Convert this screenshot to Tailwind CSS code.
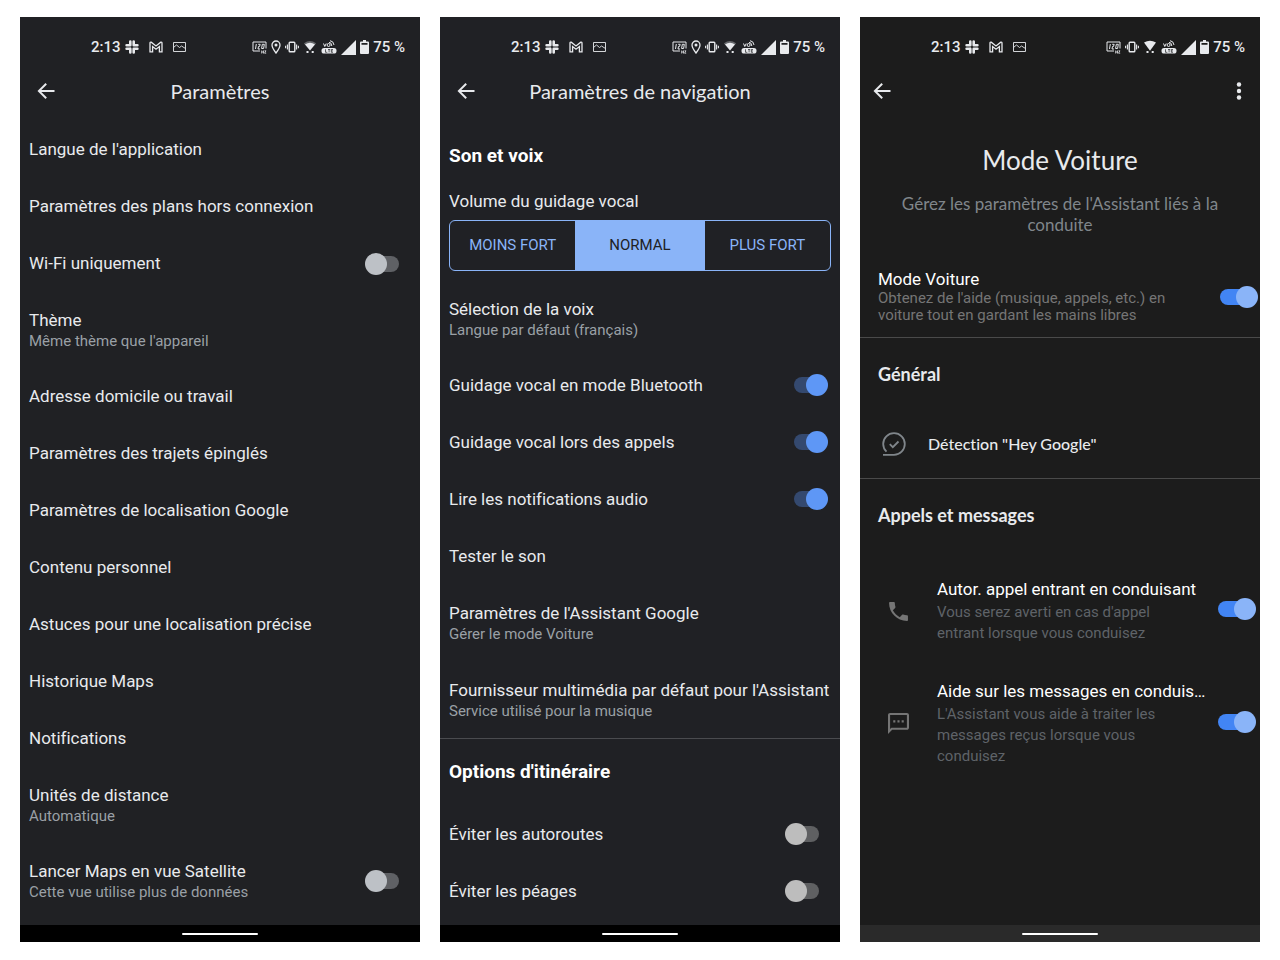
<!DOCTYPE html>
<html lang="fr">
<head>
    <meta charset="UTF-8">
    <meta name="viewport" content="width=device-width, initial-scale=1.0">
    <title>Paramètres</title>
    <script src="https://cdn.jsdelivr.net/npm/@tailwindcss/browser@4"></script>
</head>
<body class="bg-white font-['Roboto',sans-serif] text-[17px] text-[#e8eaed] [font-variant-ligatures:none]">
    <!-- Icons -->
    <svg class="hidden">
        <symbol id="slack" viewBox="0 0 14 14">
            <g stroke="currentColor" stroke-width="2.6" stroke-linecap="round">
                <path d="M5.3 1.6v3.600M1.6 5.300h3.600M8.700 1.600v3.600M8.700 5.300h3.700M5.300 8.700v3.700M1.600 8.700h3.600M8.700 8.700v3.700M8.700 8.700h3.700"/>
            </g>
        </symbol>
        <symbol id="gmail" viewBox="0 0 14 12">
            <path d="M1 10.800V2.200Q1 1 2.200 1.200L7 5l4.800-3.800Q13 1 13 2.200v8.600h-2.600V5.600L7 8.200 3.600 5.600v5.200Z" fill="none" stroke="currentColor" stroke-width="1.300"/>
        </symbol>
        <symbol id="picture" viewBox="0 0 13 12">
            <path d="M.5 1.500h12v9H.5zM.5 6.500l3-2.500 3 2.500 2-1.500 4 2.500" fill="none" stroke="currentColor" stroke-width=".9"/>
        </symbol>
        <symbol id="hz" viewBox="0 0 15 13">
            <path d="M8 10H1V1h13v6.500" fill="none" stroke="currentColor" stroke-width="1"/>
            <path d="M4.300 3l-.8 5M6.200 3.300h2L7.500 5.500h-1L6 8h2M10.300 3.300h2L11.600 7.500h-2z" fill="none" stroke="currentColor" stroke-width="1"/>
            <path d="M9.700 9.500v3M11.500 9.500v3M9.700 11h1.800M12.500 9.800h1.500l-1.500 2.400h1.700" fill="none" stroke="currentColor" stroke-width=".8"/>
        </symbol>
        <symbol id="pin" viewBox="0 0 10 14">
            <path d="M5 13C2.500 9.700 1 7.300 1 5a4 4 0 0 1 8 0c0 2.300-1.500 4.700-4 8Z" fill="none" stroke="currentColor" stroke-width="1.300"/>
            <circle cx="5" cy="5" r="1.500" fill="currentColor"/>
        </symbol>
        <symbol id="vibrate" viewBox="0 0 14 12">
            <rect x="4.200" y="1.300" width="5.600" height="9.400" rx=".8" fill="none" stroke="currentColor" stroke-width="1.400"/>
            <path d="M2.400 3.500v5M11.600 3.500v5M.6 4.800v2.400M13.400 4.800v2.400" stroke="currentColor" stroke-width="1.100"/>
        </symbol>
        <symbol id="wifi" viewBox="1 0 12 14">
            <path d="M.8 3.300Q7-1.300 13.200 3.300L11.600 5.200Q7 2 2.400 5.200Z" fill="currentColor" opacity=".35"/>
            <path d="M2 4.400Q7 1.300 12 4.400L7 10.600Z" fill="currentColor"/>
            <path d="M3.500 11h2v2h-2zM8.700 11h2v2h-2z" fill="currentColor"/>
        </symbol>
        <symbol id="wifi-full" viewBox="1 0 12 14">
            <path d="M1 2.400Q7-.8 13 2.400L7 10.800Z" fill="currentColor"/>
            <path d="M3.500 11h2v2h-2zM8.700 11h2v2h-2z" fill="currentColor"/>
        </symbol>
        <symbol id="volte" viewBox="0 0 16 14">
            <path d="M2.500 3.500l1.300 3L5.200 3.500" fill="none" stroke="currentColor" stroke-width="1"/>
            <circle cx="7.600" cy="5" r="1.500" fill="none" stroke="currentColor" stroke-width="1"/>
            <path d="M8 2.300q2.600 0 2.800 3.700M9 .7q3.500.3 4 4.300" fill="none" stroke="currentColor" stroke-width="1"/>
            <rect x=".5" y="8" width="15" height="5.600" rx="2.600" fill="currentColor"/>
            <path d="M4.500 9.300v3h1.800M7 9.500h2.200M8.100 9.500v2.900M12 9.500h-1.700v2.800H12M10.300 10.900h1.500" fill="none" stroke="#202124" stroke-width=".7"/>
        </symbol>
        <symbol id="signal" viewBox="0 0 15 15">
            <path d="M15 0v15H0Z" fill="currentColor"/>
        </symbol>
        <symbol id="battery" viewBox="0 0 9 14">
            <path d="M3 0h3v1.500H8q1 0 1 1V13q0 1-1 1H1q-1 0-1-1V2.500q0-1 1-1h2ZM1.500 3v1.800h6V3Z" fill="currentColor" fill-rule="evenodd"/>
        </symbol>
        <symbol id="back" viewBox="0 0 24 24">
            <path d="M20.500 11H7.300l5.600-5.600L11.500 4l-8 8 8 8 1.400-1.400L7.300 13h13.200z" fill="currentColor"/>
        </symbol>
        <symbol id="more" viewBox="0 0 6 18">
            <circle cx="3" cy="2.500" r="2.200" fill="currentColor"/>
            <circle cx="3" cy="9" r="2.200" fill="currentColor"/>
            <circle cx="3" cy="15.500" r="2.200" fill="currentColor"/>
        </symbol>
        <symbol id="hey-google" viewBox="0 0 24 24">
            <path d="M1 22.800h11A10.800 10.800 0 1 0 1.200 12q0 4.500 3.300 7.700" fill="none" stroke="currentColor" stroke-width="1.800"/>
            <path d="M7.800 12.200l3 3 5.700-5.700" fill="none" stroke="currentColor" stroke-width="1.800"/>
        </symbol>
        <symbol id="phone" viewBox="2 2 20 20">
            <path d="M6.620 10.790c1.440 2.830 3.760 5.140 6.590 6.590l2.200-2.200c.27-.27.67-.36 1.020-.24 1.120.37 2.330.57 3.570.57.550 0 1 .45 1 1V20c0 .55-.45 1-1 1-9.390 0-17-7.610-17-17 0-.55.450-1 1-1h3.500c.55 0 1 .45 1 1 0 1.250.2 2.450.57 3.570.11.35.030.740-.25 1.020z" fill="currentColor"/>
        </symbol>
        <symbol id="message" viewBox="2 2 20 20">
            <path d="M20 2H4c-1.100 0-2 .9-2 2v18l4-4h14c1.100 0 2-.9 2-2V4c0-1.100-.9-2-2-2zm0 14H5.200L4 17.200V4h16zM7 9h2v2H7zm4 0h2v2h-2zm4 0h2v2h-2z" fill="currentColor"/>
        </symbol>
    </svg>

    <div class="grid grid-cols-3 gap-5 px-5 pt-[17px] pb-[18px]">

        <!-- Paramètres -->
        <section class="flex flex-col bg-[#202124]">
            <div class="flex h-[60px] items-center pr-[15px] pl-[71px] text-[15px] font-medium">
                <span>2:13</span>
                <svg class="ml-1 size-[14px]"><use href="#slack"/></svg>
                <svg class="ml-[10px] h-3 w-[14px]"><use href="#gmail"/></svg>
                <svg class="ml-[10px] h-3 w-[13px]"><use href="#picture"/></svg>
                <div class="ml-auto flex items-center gap-1">
                    <svg class="h-[13px] w-[15px]"><use href="#hz"/></svg>
                    <svg class="h-[14px] w-[10px]"><use href="#pin"/></svg>
                    <svg class="h-3 w-[14px]"><use href="#vibrate"/></svg>
                    <svg class="mx-px h-[14px] w-3"><use href="#wifi"/></svg>
                    <svg class="h-[14px] w-4"><use href="#volte"/></svg>
                    <svg class="size-[15px]"><use href="#signal"/></svg>
                    <svg class="h-[14px] w-[9px]"><use href="#battery"/></svg>
                    <span>75 %</span>
                </div>
            </div>
            <header class="grid h-7 grid-cols-[24px_1fr_24px] items-center px-[14px]">
                <button type="button" aria-label="Retour"><svg class="size-6"><use href="#back"/></svg></button>
                <h1 class="text-center font-['Lato',sans-serif] text-xl">Paramètres</h1>
            </header>
            <nav class="flex flex-col pt-4 pb-[6px] pl-[9px]">
                <a href="#" class="flex h-[57px] items-center">Langue de l'application</a>
                <a href="#" class="flex h-[57px] items-center">Paramètres des plans hors connexion</a>
                <label class="flex h-[57px] items-center justify-between pr-[21px]">
                    Wi-Fi uniquement
                    <input type="checkbox" class="relative h-[22px] w-[34px] appearance-none before:absolute before:inset-y-[3px] before:right-0 before:left-2 before:rounded-full before:bg-[#5f6165] after:absolute after:top-0 after:left-0 after:size-[22px] after:rounded-full after:bg-[#bdc1c6]">
                </label>
                <a href="#" class="flex h-[76px] flex-col justify-center leading-[22px]">
                    Thème
                    <span class="text-[15px] leading-5 text-[#9aa0a6]">Même thème que l'appareil</span>
                </a>
                <a href="#" class="flex h-[57px] items-center">Adresse domicile ou travail</a>
                <a href="#" class="flex h-[57px] items-center">Paramètres des trajets épinglés</a>
                <a href="#" class="flex h-[57px] items-center">Paramètres de localisation Google</a>
                <a href="#" class="flex h-[57px] items-center">Contenu personnel</a>
                <a href="#" class="flex h-[57px] items-center">Astuces pour une localisation précise</a>
                <a href="#" class="flex h-[57px] items-center">Historique Maps</a>
                <a href="#" class="flex h-[57px] items-center">Notifications</a>
                <a href="#" class="flex h-[76px] flex-col justify-center leading-[22px]">
                    Unités de distance
                    <span class="text-[15px] leading-5 text-[#9aa0a6]">Automatique</span>
                </a>
                <label class="flex h-[76px] items-center justify-between pr-[21px]">
                    <span class="flex flex-col leading-[22px]">
                        Lancer Maps en vue Satellite
                        <span class="text-[15px] leading-5 text-[#9aa0a6]">Cette vue utilise plus de données</span>
                    </span>
                    <input type="checkbox" class="relative h-[22px] w-[34px] appearance-none before:absolute before:inset-y-[3px] before:right-0 before:left-2 before:rounded-full before:bg-[#5f6165] after:absolute after:top-0 after:left-0 after:size-[22px] after:rounded-full after:bg-[#bdc1c6]">
                </label>
            </nav>
            <div class="mt-auto flex h-[17px] items-center justify-center bg-black">
                <div class="h-[2px] w-[76px] rounded-full bg-white"></div>
            </div>
        </section>

        <!-- Paramètres de navigation -->
        <section class="flex flex-col bg-[#202125]">
            <div class="flex h-[60px] items-center pr-[15px] pl-[71px] text-[15px] font-medium">
                <span>2:13</span>
                <svg class="ml-1 size-[14px]"><use href="#slack"/></svg>
                <svg class="ml-[10px] h-3 w-[14px]"><use href="#gmail"/></svg>
                <svg class="ml-[10px] h-3 w-[13px]"><use href="#picture"/></svg>
                <div class="ml-auto flex items-center gap-1">
                    <svg class="h-[13px] w-[15px]"><use href="#hz"/></svg>
                    <svg class="h-[14px] w-[10px]"><use href="#pin"/></svg>
                    <svg class="h-3 w-[14px]"><use href="#vibrate"/></svg>
                    <svg class="mx-px h-[14px] w-3"><use href="#wifi"/></svg>
                    <svg class="h-[14px] w-4"><use href="#volte"/></svg>
                    <svg class="size-[15px]"><use href="#signal"/></svg>
                    <svg class="h-[14px] w-[9px]"><use href="#battery"/></svg>
                    <span>75 %</span>
                </div>
            </div>
            <header class="grid h-7 grid-cols-[24px_1fr_24px] items-center px-[14px]">
                <button type="button" aria-label="Retour"><svg class="size-6"><use href="#back"/></svg></button>
                <h1 class="text-center font-['Lato',sans-serif] text-xl">Paramètres de navigation</h1>
            </header>
            <div class="flex flex-col pt-[17px] pb-[5px]">
                <h2 class="flex h-[68px] items-center pl-[9px] text-[19px] font-bold text-white">Son et voix</h2>
                <div class="flex flex-col gap-2 px-[9px] pb-[10px]">
                    <h3 id="volume" class="leading-[22px]">Volume du guidage vocal</h3>
                    <div role="group" aria-labelledby="volume" class="grid h-[51px] grid-cols-[126fr_130fr_126fr] overflow-hidden rounded-md border border-[#8ab4f8] text-[15px] text-[#8ab4f8]">
                        <button type="button">MOINS FORT</button>
                        <button type="button" aria-pressed="true" class="bg-[#8ab4f8] text-[#202124]">NORMAL</button>
                        <button type="button">PLUS FORT</button>
                    </div>
                </div>
                <a href="#" class="flex h-[76px] flex-col justify-center pl-[9px] leading-[22px]">
                    Sélection de la voix
                    <span class="text-[15px] leading-5 text-[#9aa0a6]">Langue par défaut (français)</span>
                </a>
                <label class="flex h-[57px] items-center justify-between pr-3 pl-[9px]">
                    Guidage vocal en mode Bluetooth
                    <input type="checkbox" checked class="relative mb-[2px] h-[22px] w-[34px] appearance-none before:absolute before:inset-y-[3px] before:right-2 before:left-0 before:rounded-full before:bg-[#34496f] after:absolute after:top-0 after:right-0 after:size-[22px] after:rounded-full after:bg-[#5e97f6]">
                </label>
                <label class="flex h-[57px] items-center justify-between pr-3 pl-[9px]">
                    Guidage vocal lors des appels
                    <input type="checkbox" checked class="relative mb-[2px] h-[22px] w-[34px] appearance-none before:absolute before:inset-y-[3px] before:right-2 before:left-0 before:rounded-full before:bg-[#34496f] after:absolute after:top-0 after:right-0 after:size-[22px] after:rounded-full after:bg-[#5e97f6]">
                </label>
                <label class="flex h-[57px] items-center justify-between pr-3 pl-[9px]">
                    Lire les notifications audio
                    <input type="checkbox" checked class="relative mb-[2px] h-[22px] w-[34px] appearance-none before:absolute before:inset-y-[3px] before:right-2 before:left-0 before:rounded-full before:bg-[#34496f] after:absolute after:top-0 after:right-0 after:size-[22px] after:rounded-full after:bg-[#5e97f6]">
                </label>
                <a href="#" class="flex h-[57px] items-center pl-[9px]">Tester le son</a>
                <a href="#" class="flex h-[76px] flex-col justify-center pl-[9px] leading-[22px]">
                    Paramètres de l'Assistant Google
                    <span class="text-[15px] leading-5 text-[#9aa0a6]">Gérer le mode Voiture</span>
                </a>
                <a href="#" class="flex h-[77px] flex-col justify-center pl-[9px] leading-[22px] whitespace-nowrap">
                    Fournisseur multimédia par défaut pour l'Assistant
                    <span class="text-[15px] leading-5 text-[#9aa0a6]">Service utilisé pour la musique</span>
                </a>
                <hr class="border-[#4a4b4f]">
                <h2 class="flex h-[67px] items-center pl-[9px] text-[19px] font-bold text-white">Options d'itinéraire</h2>
                <label class="flex h-[57px] items-center justify-between pr-[21px] pl-[9px]">
                    Éviter les autoroutes
                    <input type="checkbox" class="relative mb-[2px] h-[22px] w-[34px] appearance-none before:absolute before:inset-y-[3px] before:right-0 before:left-2 before:rounded-full before:bg-[#5f6062] after:absolute after:top-0 after:left-0 after:size-[22px] after:rounded-full after:bg-[#bdbdbd]">
                </label>
                <label class="flex h-[57px] items-center justify-between pr-[21px] pl-[9px]">
                    Éviter les péages
                    <input type="checkbox" class="relative mb-[2px] h-[22px] w-[34px] appearance-none before:absolute before:inset-y-[3px] before:right-0 before:left-2 before:rounded-full before:bg-[#5f6062] after:absolute after:top-0 after:left-0 after:size-[22px] after:rounded-full after:bg-[#bdbdbd]">
                </label>
            </div>
            <div class="mt-auto flex h-[17px] items-center justify-center bg-black">
                <div class="h-[2px] w-[76px] rounded-full bg-white"></div>
            </div>
        </section>

        <!-- Mode Voiture -->
        <section class="flex flex-col bg-[#1c1c1c]">
            <div class="flex h-[60px] items-center pr-[15px] pl-[71px] text-[15px] font-medium">
                <span>2:13</span>
                <svg class="ml-1 size-[14px]"><use href="#slack"/></svg>
                <svg class="ml-[10px] h-3 w-[14px]"><use href="#gmail"/></svg>
                <svg class="ml-[10px] h-3 w-[13px]"><use href="#picture"/></svg>
                <div class="ml-auto flex items-center gap-1">
                    <svg class="h-[13px] w-[15px]"><use href="#hz"/></svg>
                    <svg class="h-3 w-[14px]"><use href="#vibrate"/></svg>
                    <svg class="mx-px h-[14px] w-3"><use href="#wifi-full"/></svg>
                    <svg class="h-[14px] w-4"><use href="#volte"/></svg>
                    <svg class="size-[15px]"><use href="#signal"/></svg>
                    <svg class="h-[14px] w-[9px]"><use href="#battery"/></svg>
                    <span>75 %</span>
                </div>
            </div>
            <header class="flex h-7 items-center justify-between pr-[18px] pl-[10px]">
                <button type="button" aria-label="Retour"><svg class="size-6"><use href="#back"/></svg></button>
                <button type="button" aria-label="Plus d'options"><svg class="h-[18px] w-[6px]"><use href="#more"/></svg></button>
            </header>
            <div class="px-8 pt-[39px] text-center font-['Lato',sans-serif]">
                <h1 class="text-[26px] leading-8">Mode Voiture</h1>
                <p class="mt-[17px] leading-[21px] text-[#80868b]">Gérez les paramètres de l'Assistant liés à la conduite</p>
            </div>
            <label class="mt-[35px] flex items-center justify-between border-b border-[#4a4a4a] pr-[2px] pb-[13px] pl-[18px]">
                <span class="flex max-w-[300px] flex-col gap-[2px] leading-[18px] text-white">
                    Mode Voiture
                    <span class="text-[15px] leading-[17px] text-[#757575]">Obtenez de l'aide (musique, appels, etc.) en voiture tout en gardant les mains libres</span>
                </span>
                <input type="checkbox" checked class="relative h-[22px] w-[38px] shrink-0 appearance-none before:absolute before:inset-y-[3px] before:right-2 before:left-0 before:rounded-full before:bg-[#4285f4] after:absolute after:top-0 after:right-0 after:size-[22px] after:rounded-full after:bg-[#8ab4f8]">
            </label>
            <h2 class="flex h-[71px] items-center pl-[18px] font-['Lato',sans-serif] text-lg font-bold">Général</h2>
            <a href="#" class="flex h-[70px] items-center gap-[22px] border-b border-[#4a4a4a] pl-[22px] font-['Lato',sans-serif] text-base font-medium">
                <svg class="size-6 text-[#80868b]"><use href="#hey-google"/></svg>
                Détection "Hey Google"
            </a>
            <h2 class="flex h-[71px] items-center pl-[18px] font-['Lato',sans-serif] text-lg font-bold">Appels et messages</h2>
            <div class="flex flex-col gap-9 pt-7 pr-1 pl-7">
                <label class="flex items-center">
                    <svg class="mr-7 size-[21px] shrink-0 text-[#757575]"><use href="#phone"/></svg>
                    <span class="flex min-w-0 flex-1 flex-col gap-[2px] leading-[22px] text-white">
                        Autor. appel entrant en conduisant
                        <span class="max-w-[240px] text-[15px] leading-[21px] text-[#5f6368]">Vous serez averti en cas d'appel entrant lorsque vous conduisez</span>
                    </span>
                    <input type="checkbox" checked class="relative mb-1 h-[22px] w-[38px] shrink-0 appearance-none before:absolute before:inset-y-[3px] before:right-2 before:left-0 before:rounded-full before:bg-[#4285f4] after:absolute after:top-0 after:right-0 after:size-[22px] after:rounded-full after:bg-[#8ab4f8]">
                </label>
                <label class="flex items-center">
                    <svg class="mr-7 size-[21px] shrink-0 text-[#757575]"><use href="#message"/></svg>
                    <span class="flex min-w-0 flex-1 flex-col gap-[2px] leading-[22px] text-white">
                        Aide sur les messages en conduis…
                        <span class="max-w-[240px] text-[15px] leading-[21px] text-[#5f6368]">L'Assistant vous aide à traiter les messages reçus lorsque vous conduisez</span>
                    </span>
                    <input type="checkbox" checked class="relative mb-1 h-[22px] w-[38px] shrink-0 appearance-none before:absolute before:inset-y-[3px] before:right-2 before:left-0 before:rounded-full before:bg-[#4285f4] after:absolute after:top-0 after:right-0 after:size-[22px] after:rounded-full after:bg-[#8ab4f8]">
                </label>
            </div>
            <div class="mt-auto flex h-[17px] items-center justify-center bg-[#2a2a2a]">
                <div class="h-[2px] w-[76px] rounded-full bg-white"></div>
            </div>
        </section>
    </div>
</body>
</html>
